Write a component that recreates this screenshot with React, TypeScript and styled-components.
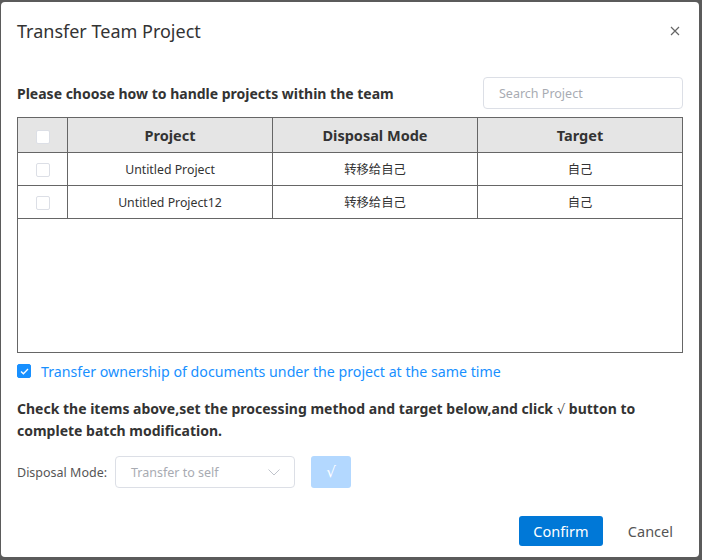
import React from "react";
import styled, { createGlobalStyle } from "styled-components";

const Global = createGlobalStyle`
  html, body { margin: 0; padding: 0; }
  body {
    background: #5b5b5b;
    font-family: "Segoe UI", "Noto Sans", "Noto Sans CJK SC", sans-serif;
    width: 702px;
    height: 560px;
    overflow: hidden;
  }
`;

const Stage = styled.div`
  width: 702px;
  height: 560px;
  padding: 2px 3px 3px 1px;
  box-sizing: border-box;
  display: flex;
`;

const Dialog = styled.div`
  flex: 1;
  background: #fff;
  border-radius: 4px;
  display: flex;
  flex-direction: column;
  padding: 0 16px 0 16px;
  box-sizing: border-box;
`;

const Header = styled.div`
  height: 58px;
  display: flex;
  align-items: center;
  justify-content: space-between;
`;

const Title = styled.h1`
  margin: 0;
  font-size: 18px;
  font-weight: 400;
  color: #333;
`;

const Close = styled.button`
  border: none;
  background: none;
  padding: 0;
  width: 16px;
  height: 16px;
  display: flex;
  align-items: center;
  justify-content: center;
  cursor: pointer;
`;

const TopRow = styled.div`
  margin-top: 17px;
  height: 32px;
  display: flex;
  align-items: center;
  justify-content: space-between;
`;

const Heading = styled.div`
  font-size: 14px;
  font-weight: 700;
  color: #333;
`;

const Search = styled.input`
  width: 200px;
  height: 32px;
  box-sizing: border-box;
  border: 1px solid #dcdfe6;
  border-radius: 4px;
  padding: 0 15px;
  font-size: 12.5px;
  font-family: inherit;
  color: #333;
  outline: none;
  &::placeholder { color: #a8abb2; }
`;

const TableBox = styled.div`
  margin-top: 8px;
  height: 236px;
  border: 1px solid #666;
  box-sizing: border-box;
`;

const Table = styled.table`
  width: 100%;
  border-collapse: collapse;
  table-layout: fixed;
`;

const Th = styled.th<{ $w?: number }>`
  ${(p) => (p.$w ? `width: ${p.$w}px;` : "")}
  height: 34px;
  background: #e5e5e5;
  font-size: 14.5px;
  font-weight: 700;
  color: #333;
  border-right: 1px solid #666;
  border-bottom: 1px solid #666;
  padding: 0;
  &:last-child { border-right: none; }
`;

const Td = styled.td`
  height: 32px;
  font-size: 12.3px;
  color: #333;
  text-align: center;
  border-right: 1px solid #666;
  border-bottom: 1px solid #666;
  padding: 0;
  &:last-child { border-right: none; }
`;

const Box = styled.span<{ $checked?: boolean }>`
  display: inline-flex;
  align-items: center;
  justify-content: center;
  flex-shrink: 0;
  width: 14px;
  height: 14px;
  box-sizing: border-box;
  border: 1px solid ${(p) => (p.$checked ? "#1890ff" : "#dcdfe6")};
  background: ${(p) => (p.$checked ? "#1890ff" : "#fff")};
  border-radius: 2px;
  vertical-align: middle;
`;

const CheckRow = styled.label`
  margin-top: 7px;
  height: 22px;
  display: flex;
  align-items: center;
  gap: 10px;
  font-size: 14.2px;
  color: #1890ff;
`;

const Note = styled.p`
  margin: 16px 0 0;
  font-size: 14px;
  font-weight: 700;
  line-height: 22px;
  color: #333;
`;

const Radical = styled.span`
  font-family: "DejaVu Sans", sans-serif;
  font-weight: 400;
  font-size: 0.95em;
  line-height: 1;
`;

const BatchRow = styled.div`
  margin-top: 14px;
  height: 32px;
  display: flex;
  align-items: center;
`;

const Label = styled.span`
  font-size: 12.5px;
  color: #555;
  width: 98px;
`;

const Select = styled.div`
  width: 180px;
  height: 32px;
  box-sizing: border-box;
  border: 1px solid #dcdfe6;
  border-radius: 4px;
  padding: 0 14px 0 15px;
  display: flex;
  align-items: center;
  justify-content: space-between;
  font-size: 12.5px;
  color: #a8abb2;
`;

const ApplyBtn = styled.button`
  margin-left: 16px;
  width: 40px;
  height: 32px;
  border: none;
  border-radius: 3px;
  background: #b3d8ff;
  color: #fff;
  font-size: 15px;
  font-family: "DejaVu Sans", sans-serif;
  padding: 0;
`;

const Footer = styled.div`
  margin-top: 28px;
  display: flex;
  align-items: center;
  justify-content: flex-end;
  gap: 25px;
  padding-right: 10px;
`;

const Primary = styled.button`
  width: 84px;
  height: 30px;
  border: none;
  border-radius: 3px;
  background: #0078d7;
  color: #fff;
  font-size: 14.5px;
  font-family: inherit;
  padding: 0;
`;

const Plain = styled.button`
  border: none;
  background: none;
  color: #555;
  font-size: 14.5px;
  font-family: inherit;
  padding: 0;
`;

const rows = [
  { name: "Untitled Project", mode: "转移给自己", target: "自己" },
  { name: "Untitled Project12", mode: "转移给自己", target: "自己" },
];

export default function App() {
  return (
    <>
      <Global />
      <Stage>
        <Dialog>
          <Header>
            <Title>Transfer Team Project</Title>
            <Close aria-label="close">
              <svg width="10" height="10" viewBox="0 0 10 10">
                <path d="M1 1L9 9M9 1L1 9" stroke="#666" strokeWidth="1.2" />
              </svg>
            </Close>
          </Header>
          <TopRow>
            <Heading>Please choose how to handle projects within the team</Heading>
            <Search placeholder="Search Project" />
          </TopRow>
          <TableBox>
            <Table>
              <thead>
                <tr>
                  <Th $w={49}>
                    <Box />
                  </Th>
                  <Th $w={204}>Project</Th>
                  <Th $w={204}>Disposal Mode</Th>
                  <Th>Target</Th>
                </tr>
              </thead>
              <tbody>
                {rows.map((r) => (
                  <tr key={r.name}>
                    <Td>
                      <Box />
                    </Td>
                    <Td>{r.name}</Td>
                    <Td>{r.mode}</Td>
                    <Td>{r.target}</Td>
                  </tr>
                ))}
              </tbody>
            </Table>
          </TableBox>
          <CheckRow>
            <Box $checked>
              <svg width="9" height="7" viewBox="0 0 9 7">
                <path d="M1 3.5L3.4 5.8L8 1" stroke="#fff" strokeWidth="1.3" fill="none" />
              </svg>
            </Box>
            Transfer ownership of documents under the project at the same time
          </CheckRow>
          <Note>
            Check the items above,set the processing method and target below,and click <Radical>√</Radical> button to
            complete batch modification.
          </Note>
          <BatchRow>
            <Label>Disposal Mode:</Label>
            <Select>
              Transfer to self
              <svg width="12" height="7" viewBox="0 0 12 7">
                <path d="M0.5 0.5L6 6L11.5 0.5" stroke="#c0c4cc" strokeWidth="1" fill="none" />
              </svg>
            </Select>
            <ApplyBtn>√</ApplyBtn>
          </BatchRow>
          <Footer>
            <Primary>Confirm</Primary>
            <Plain>Cancel</Plain>
          </Footer>
        </Dialog>
      </Stage>
    </>
  );
}
